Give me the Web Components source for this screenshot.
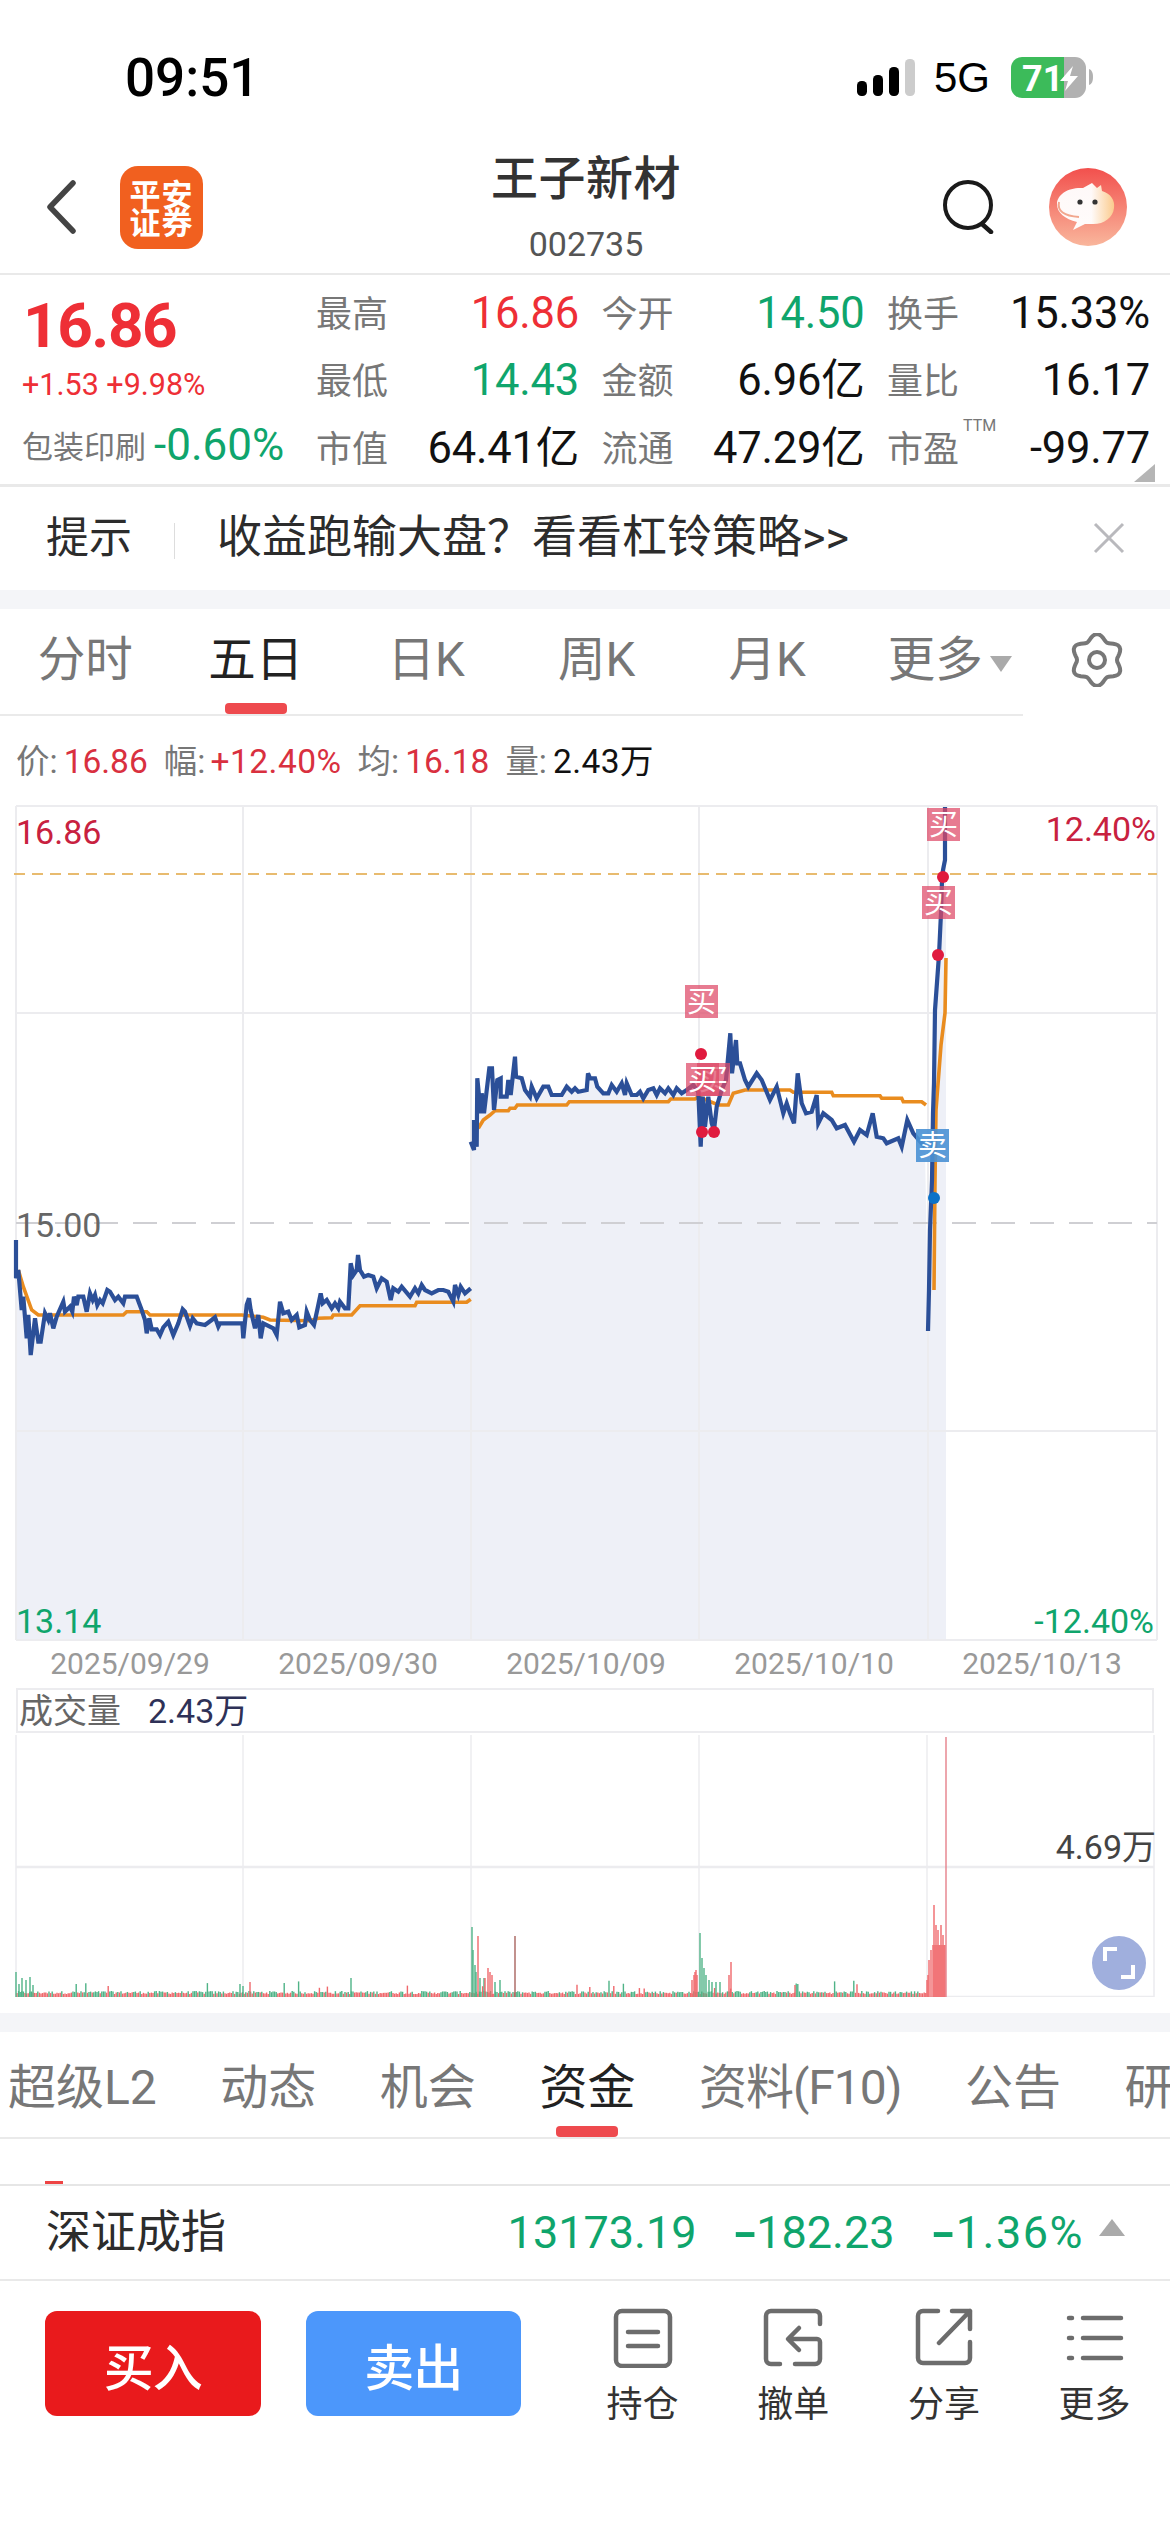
<!DOCTYPE html>
<html lang="zh"><head><meta charset="utf-8"><title>王子新材</title>
<style>
html,body{margin:0;padding:0;background:#fff}
body{width:1170px;height:2532px;overflow:hidden;font-family:Roboto,"Noto Sans CJK SC",sans-serif;color:#222;display:flex;flex-direction:column}
</style></head><body>
<status-bar></status-bar>
<stock-header></stock-header>
<quote-panel></quote-panel>
<tip-bar></tip-bar>
<gap-band></gap-band>
<period-tabs></period-tabs>
<chart-info></chart-info>
<price-chart></price-chart>
<volume-chart></volume-chart>
<gap-band></gap-band>
<section-tabs></section-tabs>
<index-ticker></index-ticker>
<action-bar></action-bar>
<script>
function def(name,html){
  customElements.define(name,class extends HTMLElement{
    constructor(){super();this.attachShadow({mode:'open'}).innerHTML=typeof html==='function'?html():html;}
  });
}
const RED='#ee2f36',GRN='#0fa56c',CRIM='#c8213f';

def('status-bar',`<style>
:host{display:flex;box-sizing:border-box;height:130px;padding:26px 77px 0 125px;align-items:center;color:#000}
.t{font:500 53px/60px Roboto,sans-serif}
.r{margin-left:auto;display:flex;align-items:center;gap:21px}
.g{font:400 42px/50px "Liberation Sans",sans-serif}
.s{margin-right:-2px}
svg{display:block}
</style>
<span class="t">09:51</span>
<div class="r">
<svg class="s" width="58" height="38" viewBox="0 0 58 38"><rect x="0" y="22" width="10" height="15" rx="4.5"/><rect x="16" y="16" width="10" height="21" rx="4.5"/><rect x="32" y="8" width="10" height="29" rx="4.5"/><rect x="48" y="0" width="10" height="37" rx="4.5" fill="#ccc"/></svg>
<span class="g">5G</span>
<svg width="82" height="42" viewBox="0 0 82 42"><defs><clipPath id="b"><rect width="75" height="41" rx="11"/></clipPath></defs><g clip-path="url(#b)"><rect width="53" height="41" fill="#3cbb5a"/><rect x="53" width="22" height="41" fill="#b1b1b1"/></g><path d="M78 12c3 1 4 4 4 8s-1 7-4 8z" fill="#b1b1b1"/><text x="11" y="34" font-family="Roboto,sans-serif" font-weight="700" font-size="36" fill="#fff">71</text><path d="M62 9 49 24h8l-3 10 13-15h-8z" fill="#fff"/></svg>
</div>`);

def('stock-header',`<style>
:host{display:grid;grid-template-columns:1fr auto 1fr;box-sizing:border-box;height:145px;padding:11px 43px 0 45px;align-items:center;border-bottom:2px solid #e9e9e9}
.l{display:flex;align-items:center;gap:43px}
.logo{width:83px;height:83px;border-radius:18px;background:#f1601f;color:#fff;font:700 31px/28px "Noto Sans CJK SC",sans-serif;display:flex;flex-direction:column;align-items:center;justify-content:center;letter-spacing:1px}
.c{text-align:center}
.n{font:500 47px/54px "Noto Sans CJK SC",sans-serif;color:#333;letter-spacing:.5px;margin-top:-3px}
.d{font:400 34px/40px Roboto,sans-serif;color:#555;margin-top:22px}
.r{display:flex;align-items:center;justify-content:flex-end;gap:54px}
svg{display:block}
</style>
<div class="l"><svg width="32" height="54" viewBox="0 0 32 54"><path d="M28 3 5 27l23 24" fill="none" stroke="#444" stroke-width="5.5" stroke-linecap="round" stroke-linejoin="round"/></svg>
<div class="logo"><span>平安</span><span>证券</span></div></div>
<div class="c"><div class="n">王子新材</div><div class="d">002735</div></div>
<div class="r"><svg width="52" height="54" viewBox="0 0 52 54"><circle cx="25" cy="25" r="23" fill="none" stroke="#1a1a1a" stroke-width="4"/><path d="M39 44l9 8" stroke="#1a1a1a" stroke-width="4.5" stroke-linecap="round"/></svg>
<svg width="78" height="78" viewBox="0 0 78 78"><defs><linearGradient id="a" x1="0" y1="0" x2="0" y2="1"><stop offset="0" stop-color="#f2504d"/><stop offset="1" stop-color="#f9b69c"/></linearGradient><linearGradient id="y" x1="0" y1="0" x2="1" y2="0"><stop offset="0" stop-color="#fff"/><stop offset=".6" stop-color="#fff"/><stop offset="1" stop-color="#fbce8e"/></linearGradient></defs><circle cx="39" cy="39" r="39" fill="url(#a)"/><path d="M43 15l5 5 4-3 1 6c9 3 13 9 12 17-1 10-11 17-23 16l-6 0-12 6 4-8C16 51 8 45 8 36c0-10 12-17 26-16z" fill="url(#y)" opacity=".96"/><circle cx="31" cy="34" r="2.6" fill="#333"/><circle cx="46" cy="34" r="2.6" fill="#333"/><path d="M10 34c-2 9 5 14 20 15" fill="none" stroke="#f2a78e" stroke-width="2"/></svg></div>`);

def('quote-cell',`<style>
:host{display:flex;justify-content:space-between;align-items:center;position:relative;height:67.5px}
::slotted([slot=label]){font-size:36px;line-height:44px;color:#777;margin-top:2px}
</style><slot name="label"></slot><slot></slot>`);

def('quote-panel',`<style>
:host{display:flex;box-sizing:border-box;height:212px;padding:5px 20px 0 22px;border-bottom:3px solid #e9e9e9;position:relative}
.left{width:294px;display:flex;flex-direction:column}
.big{font:700 62px/72px Roboto,sans-serif;color:${RED};letter-spacing:-1.4px;margin:10px 0 0 1px;height:72px}
.chg{font:400 30.5px/40px Roboto,sans-serif;color:${RED};margin-top:3px;height:40px;white-space:nowrap}
.pl{display:flex;align-items:center;margin-top:15px;line-height:50px}
.pl b{font:400 31px/50px "Noto Sans CJK SC",sans-serif;color:#777}
.pl i{font:normal 400 44px/50px Roboto,sans-serif;color:${GRN};margin-left:8px}
.g{display:grid;grid-template-columns:repeat(3,263px);column-gap:22.5px;align-content:start}
.v{font-size:43.5px;line-height:50px;font-weight:400;color:#111;letter-spacing:-.2px}
.r{color:${RED}}.n{color:${GRN}}
.ttm{position:absolute;left:76px;top:2px;font-size:16px;line-height:18px;color:#777}
.corner{position:absolute;right:15px;bottom:2px;width:21px;height:18px;background:#b5b5b5;clip-path:polygon(100% 0,100% 100%,0 100%)}
</style>
<div class="left"><div class="big">16.86</div><div class="chg">+1.53 +9.98%</div><div class="pl"><b>包装印刷</b><i>-0.60%</i></div></div>
<div class="g">
<quote-cell><span slot="label">最高</span><span class="v r">16.86</span></quote-cell>
<quote-cell><span slot="label">今开</span><span class="v n">14.50</span></quote-cell>
<quote-cell><span slot="label">换手</span><span class="v">15.33%</span></quote-cell>
<quote-cell><span slot="label">最低</span><span class="v n">14.43</span></quote-cell>
<quote-cell><span slot="label">金额</span><span class="v">6.96亿</span></quote-cell>
<quote-cell><span slot="label">量比</span><span class="v">16.17</span></quote-cell>
<quote-cell><span slot="label">市值</span><span class="v">64.41亿</span></quote-cell>
<quote-cell><span slot="label">流通</span><span class="v">47.29亿</span></quote-cell>
<quote-cell><span slot="label">市盈<span class="ttm">TTM</span></span><span class="v">-99.77</span></quote-cell>
</div><div class="corner"></div>`);

def('tip-bar',`<style>
:host{display:flex;align-items:center;box-sizing:border-box;height:103px;padding:0 45px 2px 46px;color:#2c2c2c}
.a{font-size:43px;line-height:56px}
.s{width:1px;height:36px;background:#ddd;margin:6px 42px 0}
.b{font-size:45px;line-height:56px}
svg{margin-left:auto;display:block}
</style><span class="a">提示</span><span class="s"></span><span class="b">收益跑输大盘？看看杠铃策略&gt;&gt;</span>
<svg width="32" height="32" viewBox="0 0 32 32"><path d="M2 2l28 28M30 2 2 30" stroke="#b9b9bd" stroke-width="3"/></svg>`);

def('gap-band',`<style>:host{display:block;height:19px;background:#f4f5f8}</style>`);

def('period-tabs',(()=>{
  let d='';for(let i=0;i<=72;i++){const t=i/72*2*Math.PI,r=23+3*Math.cos(6*t);d+=(i?'L':'M')+(27+r*Math.sin(t)).toFixed(1)+' '+(27-r*Math.cos(t)).toFixed(1);}
  return `<style>
:host{display:flex;box-sizing:border-box;height:107px}
.w{display:grid;grid-template-columns:repeat(6,1fr);width:1023px;flex:none;border-bottom:2px solid #eaeaea;box-sizing:border-box}
.t{box-sizing:border-box;position:relative;display:flex;align-items:center;justify-content:center;font-size:47.5px;line-height:60px;color:#777;padding-bottom:3px;white-space:nowrap}
.on{color:#222}
.on::after{content:"";position:absolute;left:50%;margin-left:-31px;bottom:0;width:62px;height:11px;background:#ee4a4e;border-radius:4px}
.m{padding-left:24px}
.tri{width:0;height:0;border:11px solid transparent;border-top:16px solid #aaa;border-bottom:0;margin-left:7px;margin-top:8px}
.g{flex:1;display:flex;align-items:center;justify-content:center;padding-bottom:5px}
</style><div class="w"><div class="t">分时</div><div class="t on">五日</div><div class="t">日K</div><div class="t">周K</div><div class="t">月K</div><div class="t m">更多<span class="tri"></span></div></div>
<div class="g"><svg width="54" height="54" viewBox="0 0 54 54"><path d="${d}Z" fill="none" stroke="#777" stroke-width="4"/><circle cx="27" cy="27" r="8" fill="none" stroke="#777" stroke-width="4"/></svg></div>`;
})());

def('chart-info',`<style>
:host{display:flex;box-sizing:border-box;height:74px;padding:18px 0 0 16px;align-items:center;font-size:33.5px;line-height:40px;color:#777;white-space:pre}
.s{margin-right:16px;display:flex}
.r{color:#d9303f;margin-left:6px}.k{color:#111;margin-left:6px;letter-spacing:.4px}
</style><span class="s">价:<span class="r">16.86</span></span><span class="s">幅:<span class="r" style="margin-left:5px;letter-spacing:.5px">+12.40%</span></span><span class="s">均:<span class="r">16.18</span></span><span class="s">量:<span class="k">2.43万</span></span>`);

/* ---------- chart geometry, in page pixels ---------- */
const z10=[18,0,18,115,25,90,35,210,40,170,50,295,55,225,62,345,75,235,85,305,92,305,105,220,115,240,120,220,130,265,140,230,160,185,165,215,180,200,187,215,192,170,200,195,205,170,220,170,230,215,240,160,248,180,255,165,262,195,270,180,278,190,292,150,300,155,315,180,325,170,340,190,345,170,380,170,395,210,405,240,410,280,418,235,425,268,440,268,450,285,460,262,475,245,490,285,505,250,518,208,525,215,540,258,548,235,560,250,585,255,605,240,615,232,625,260,630,250,697,250,700,295,710,195,717,175,722,210,735,265,745,225,752,295,760,250,790,265,800,285,810,185,820,220,835,215,845,240,860,225,868,262,885,255,890,215,900,240,912,255,925,195,932,160,938,190,950,180,965,205,975,190,985,205,990,185,1005,205,1015,205,1022,70,1030,105,1040,90,1044,45,1050,90,1062,110,1075,105,1090,110,1100,145,1115,115,1130,125,1142,180,1150,145,1165,155,1175,140,1200,170,1215,145,1225,160,1235,135,1245,150,1265,160,1285,150,1300,150,1315,155,1330,185,1335,135,1345,165,1352,140,1365,160,1382,145];
const z10o=[25,90,40,140,65,210,85,225,340,225,350,215,410,215,420,225,695,225,760,232,780,240,900,242,925,235,965,233,970,225,1025,225,1050,197,1215,197,1220,187,1370,187,1382,178];
const z12=[32,305,42,330,42,240,50,320,52,115,62,220,65,160,72,220,88,85,96,85,102,210,112,120,122,115,122,170,140,170,145,120,152,165,165,50,168,110,185,115,195,150,210,170,215,140,230,175,250,140,265,140,275,165,305,165,320,140,335,155,345,145,355,155,380,150,384,100,390,115,405,115,412,140,430,160,445,160,455,135,470,155,485,130,495,165,500,130,515,165,530,165,540,155,550,175,565,150,580,145,590,165,600,145,615,160,625,145,640,165,650,145,665,160,680,150,700,135];
const z12o=[55,265,70,240,90,225,105,212,145,212,150,205,165,205,172,195,320,195,328,185,625,185,632,177,705,177];
const z7=[145,935,152,1100,158,950,165,1040,175,950,185,1030,192,1050,200,980,215,930,228,900,241,760,246,880,258,780,262,850,270,850,285,900,295,920,320,880,335,900,360,960,380,920,400,1000,410,970,420,1000,432,1030,443,880,455,970,468,1000,485,995,500,945,505,1030,520,1000,545,1020,560,1045,585,1035,612,1085,630,1050,650,1065,668,1000,680,1070,700,1075,710,1090,745,1075,755,1100,772,1020,790,1060,815,1090,825,1100];
const z7o=[145,950,205,975,235,975,250,940,285,930,420,930,430,937,545,937,550,947,690,947,695,955,755,955,760,965,815,965,828,975];
const conv=(a,ox,oy)=>{const r=[];for(let i=0;i<a.length;i+=2)r.push([+(ox+a[i]/3).toFixed(1),+(oy+a[i+1]/3).toFixed(1)]);return r;};
const str=p=>p.map(q=>q.join(',')).join(' ');
const blue0=conv(z10,10,1240);
const blue1=[...conv(z12,460,1040),...conv(z7,650,780)];
const blue2=[[928,1331],[929,1290],[930,1230],[932,1180],[933,1113],[934,1083],[935,1010],[939,955],[941,913],[942,880],[943,870],[945,860],[945,807]];
const avg0=conv(z10o,10,1240);
const avg1=[...conv(z12o,460,1040),...conv(z7o,650,780)];
const avg2=[[934,1290],[935,1180],[936,1110],[941,1045],[945,1013],[946,958]];
const tag=(x,y,t,c)=>`<rect x="${x}" y="${y}" width="33" height="33" fill="${c}"/><text x="${x+16.5}" y="${y+27}" text-anchor="middle" font-size="29" fill="#fff">${t}</text>`;
const TAGC='rgba(222,72,102,.72)';

def('price-chart',()=>{
  const fill=str([[16,1640],...blue0,...blue1,...blue2,[946,860],[946,1640]]);
  const v=[16,243,471,699,928,1157].map(x=>`<path d="M${x} 806V1640"/>`).join('');
  const h=[806,1013,1431,1640].map(y=>`<path d="M16 ${y}H1157"/>`).join('');
  const dots=[[701,1054],[702,1132],[714,1132],[938,955],[943,877]].map(d=>`<circle cx="${d[0]}" cy="${d[1]}" r="6" fill="#e01a3e"/>`).join('');
  const lines=[avg0,avg1,avg2].map(p=>`<polyline points="${str(p)}" fill="none" stroke="#e98c1f" stroke-width="3.6"/>`).join('');
  const blues=[blue0,blue1,blue2].map(p=>`<polyline points="${str(p)}" fill="none" stroke="#2b4f98" stroke-width="4.2"/>`).join('');
  return `<style>
:host{display:block;position:relative;width:1170px;height:895px}
svg{display:block;position:absolute;left:0;top:0}
.lb{position:absolute;font-size:34px;line-height:40px;white-space:nowrap}
.d{position:absolute;left:16px;top:856px;display:grid;grid-template-columns:repeat(5,228px);font-size:30px;line-height:36px;color:#999;text-align:center}
text{font-family:"Noto Sans CJK SC",sans-serif}
</style>
<svg width="1170" height="855" viewBox="0 790 1170 855">
<polygon points="${fill}" fill="#eef0f7"/>
<g stroke="#ececef" stroke-width="2" fill="none">${v}${h}</g>
<path d="M14 874H1157" stroke="#e8bb6f" stroke-width="2" stroke-dasharray="11 7" fill="none"/>
<path d="M16 1223H1157" stroke="#cfcfd3" stroke-width="2" stroke-dasharray="24 15" fill="none"/>
${lines}${blues}
${dots}<circle cx="934" cy="1198" r="6" fill="#0b72c8"/>
${tag(927,808,'买',TAGC)}${tag(922,886,'买',TAGC)}${tag(685,985,'买',TAGC)}${tag(697,1063,'买',TAGC)}${tag(686,1063,'买',TAGC)}${tag(916,1129,'卖','rgba(74,145,212,.9)')}
</svg>
<span class="lb" style="left:16px;top:22px;color:${CRIM}">16.86</span>
<span class="lb" style="right:14px;top:19px;color:${CRIM}">12.40%</span>
<span class="lb" style="left:16px;top:415px;color:#666">15.00</span>
<span class="lb" style="left:16px;top:811px;color:${GRN}">13.14</span>
<span class="lb" style="right:16px;top:811px;color:${GRN}">-12.40%</span>
<div class="d"><span>2025/09/29</span><span>2025/09/30</span><span>2025/10/09</span><span>2025/10/10</span><span>2025/10/13</span></div>`;
});

def('volume-chart',()=>{
  let s=12345;const rnd=()=>(s=(s*1103515245+12345)&0x7fffffff)/0x7fffffff;
  const R='#f0686c',G='#4fb387';let bars='';
  const bar=(x,top,c)=>{bars+=`<path d="M${x} ${top}V1997" stroke="${c}"/>`;};
  for(let x=17;x<927;x+=1.6){const a=rnd(),b=rnd();bar(+x.toFixed(1),1997-(a<.035?8+b*9:3+b*3),b<.55?R:G);}
  for(const [x,t] of [[16,1972],[19,1984],[22,1978],[26,1980],[30,1977],[33,1985],[240,1984],[243,1986],[351,1978],[472,1927],[473,1950],[475,1965],[476,1972],[480,1978],[484,1978],[700,1933],[702,1958],[704,1968],[706,1975],[709,1980],[712,1982],[716,1982],[720,1982],[495,1982],[500,1980]])bar(x,t,G);
  for(const [x,t] of [[478,1936],[488,1968],[490,1972],[492,1975],[485,1978],[731,1962],[729,1975],[692,1980],[694,1975],[695,1972],[696,1970],[697,1975],[795,1985],[250,1982]])bar(x,t,R);
  bar(515,1936,'#a8635e');
  for(const [x,t] of [[927,1980],[928,1975],[929,1960],[931,1950],[933,1945],[934,1905],[935,1945],[936,1925],[937,1945],[938,1930],[939,1945],[940,1945],[941,1925],[942,1945],[943,1935],[944,1945],[945,1945]])bar(x,t,R);
  bar(946,1737,'#e5808a');
  const v=[243,471,699,927].map(x=>`<path d="M${x} 1735V1997"/>`).join('');
  return `<style>
:host{display:block;position:relative;height:328px;box-sizing:border-box}
.h{margin:3px 16px 0;height:45px;box-sizing:border-box;border:solid #ececef;border-width:2px 2px 2px;display:flex;align-items:center;padding-left:1px;font-size:34px;line-height:40px;color:#666}
.h b{font-weight:400;color:#2e3157;margin-left:27px}
svg{display:block}
.m{position:absolute;right:14px;top:142px;font-size:34px;line-height:40px;color:#444}
</style>
<div class="h"><span>成交量</span><b>2.43万</b></div>
<svg width="1170" height="264" viewBox="0 1733 1170 264" stroke-width="1.4">
<g stroke="#ececef" stroke-width="1.5" fill="none"><path d="M16 1735V1997M1154 1735V1997"/>${v}</g>
<path d="M16 1867H1154M16 1997H1154" stroke="#ececef" stroke-width="2.5" fill="none"/>
${bars}
<circle cx="1119" cy="1963" r="27" fill="#a0afdd"/>
<path d="M1105 1961v-12h12M1133 1965v12h-12" fill="none" stroke="#fff" stroke-width="4"/>
</svg><span class="m">4.69万</span>`;
});

def('section-tabs',`<style>
:host{display:block;height:152px;overflow:hidden;position:relative;box-sizing:border-box}
.w{display:flex;height:107px;box-sizing:border-box;padding:0 0 0 8px;gap:63.5px;border-bottom:2px solid #eaeaea;white-space:nowrap;overflow:hidden}
.t{position:relative;flex:none;font-size:48px;line-height:60px;color:#777;padding-top:26px}
.on{color:#222}
.on::after{content:"";position:absolute;left:50%;margin-left:-31px;top:94px;width:62px;height:11px;background:#ee4a4e;border-radius:4px}
.mark{position:absolute;left:45px;bottom:0;width:18px;height:3px;background:#e44}
</style><div class="w"><span class="t">超级L2</span><span class="t">动态</span><span class="t">机会</span><span class="t on">资金</span><span class="t" style="letter-spacing:-1px">资料(F10)</span><span class="t">公告</span><span class="t">研</span></div><div class="mark"></div>`);

def('index-ticker',`<style>
:host{display:flex;align-items:center;box-sizing:border-box;height:97px;padding:0 45px 0 46px;border-top:2px solid #e6e6e6;border-bottom:2px solid #e9e9e9;font-size:45px;line-height:56px}
.n{color:#2c2c2c}
.v{margin-left:auto;display:flex;gap:35px;color:${GRN}}
.v span{display:flex}
.v i{font-style:normal;font-weight:700;display:inline-block;transform:scaleX(1.5);transform-origin:left center;margin-right:7px}
.tri{width:0;height:0;border:13px solid transparent;border-bottom:17px solid #aaa;border-top:0;margin-left:15px;margin-top:-10px}
</style><span class="n">深证成指</span><span class="v"><span>13173.19</span><span><i>-</i>182.23</span><span style="letter-spacing:1.5px"><i>-</i>1.36%</span></span><span class="tri"></span>`);

def('action-item',`<style>
:host{display:flex;flex-direction:column;align-items:center;width:151px;font-size:36px;line-height:40px;color:#333;gap:17px;margin-top:-3px}
</style><slot name="icon"></slot><slot></slot>`);

def('action-bar',`<style>
:host{display:flex;box-sizing:border-box;flex:1;padding:30px 0 0 45px;align-items:flex-start}
.b{width:216px;height:105px;border-radius:12px;color:#fff;font-size:50px;font-weight:500;display:flex;align-items:center;justify-content:center;letter-spacing:-1px}
.buy{background:#e91a1c}.sell{background:#4c97fb;margin:0 46px 0 45px}
svg{display:block}
svg *{fill:none;stroke:#6c6c6c;stroke-width:4.5;stroke-linecap:round;stroke-linejoin:round}
</style><div class="b buy">买入</div><div class="b sell">卖出</div>
<action-item><svg slot="icon" width="60" height="60" viewBox="0 0 60 60"><rect x="3" y="3" width="54" height="55" rx="6"/><path d="M15 24h30M15 38h30"/></svg>持仓</action-item>
<action-item><svg slot="icon" width="60" height="60" viewBox="0 0 60 60"><path d="M17 56H8a5 5 0 0 1-5-5V8a5 5 0 0 1 5-5h44a5 5 0 0 1 5 5v8M32 56h20a5 5 0 0 0 5-5V34a3 3 0 0 0-3-3H26M36 20 25 31l11 11"/></svg>撤单</action-item>
<action-item><svg slot="icon" width="60" height="60" viewBox="0 0 60 60"><path d="M24 3H9a5 5 0 0 0-5 5v42a5 5 0 0 0 5 5h42a5 5 0 0 0 5-5V34M38 3h18v18M56 3 25 35"/></svg>分享</action-item>
<action-item><svg slot="icon" width="60" height="60" viewBox="0 0 60 60"><path d="M4 10h3M4 30h3M4 50h3M18 10h38M18 30h38M18 50h38"/></svg>更多</action-item>`);
</script>
</body></html>
